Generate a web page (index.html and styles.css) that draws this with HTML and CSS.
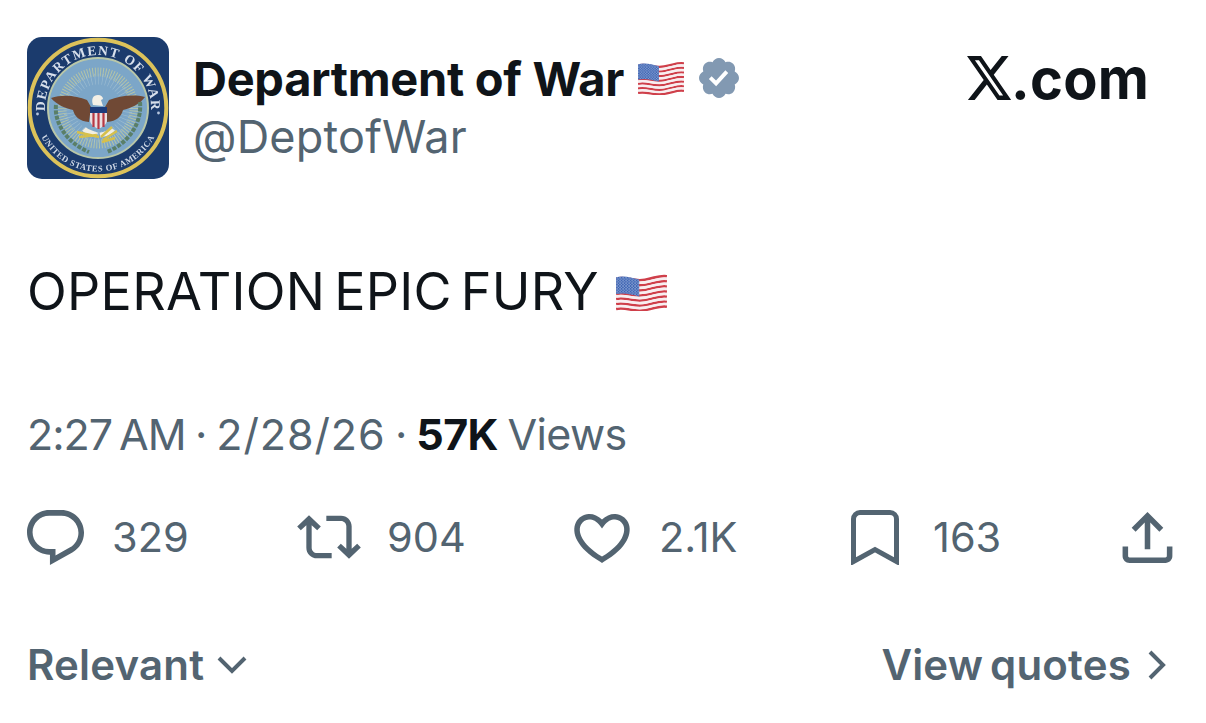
FILE: index.html
```html
<!DOCTYPE html>
<html lang="en">
<head>
<meta charset="utf-8">
<title>Department of War on X</title>
<link rel="stylesheet" href="styles.css">
</head>
<body>
<svg class="defs" width="0" height="0" aria-hidden="true">
  <defs>
    <pattern id="stars" width="2.6" height="2.4" patternUnits="userSpaceOnUse">
      <circle cx="0.8" cy="0.8" r="0.55" fill="#c9d4ec"/>
      <circle cx="2.1" cy="2" r="0.45" fill="#b6c4e4"/>
    </pattern>
    <path id="stripe" d="M0 2C9 0 15 5 25 3S38-1 44 0" fill="none" stroke-width="2.3"/>
    <symbol id="flag" viewBox="0 0 44 32">
      <g stroke="#cf3f4a">
        <use href="#stripe" y="2"/><use href="#stripe" y="6.4"/><use href="#stripe" y="10.8"/><use href="#stripe" y="15.2"/><use href="#stripe" y="19.6"/><use href="#stripe" y="24"/><use href="#stripe" y="28.2"/>
      </g>
      <g stroke="#f8eef0">
        <use href="#stripe" y="4.2"/><use href="#stripe" y="8.6"/><use href="#stripe" y="13"/><use href="#stripe" y="17.4"/><use href="#stripe" y="21.8"/><use href="#stripe" y="26.1"/>
      </g>
      <path d="M0 2.800C7 1.200 13 3 20 4.800V19.400C13 17.600 7 16 0 17.400Z" fill="#3f66b4"/>
      <path d="M0 2.800C7 1.200 13 3 20 4.800V19.400C13 17.600 7 16 0 17.400Z" fill="url(#stars)"/>
    </symbol>
    <path id="arc-top" d="M71 71m-53 0a53 53 0 0 1 106 0"/>
    <path id="arc-bottom" d="M71 71m-63.500 0a63.500 63.500 0 0 0 127 0"/>
    <filter id="soft"><feGaussianBlur stdDeviation="0.45"/></filter>
  </defs>
</svg>

<main class="post">
  <header class="head">
    <div class="who">
      <svg class="seal" viewBox="0 0 142 142" role="img" aria-label="Department of War seal">
        <rect width="142" height="142" rx="15" fill="#1b3b6d"/>
        <g filter="url(#soft)">
          <circle cx="71" cy="71" r="68.300" fill="none" stroke="#dcc25a" stroke-width="4"/>
          <circle cx="71" cy="71" r="50" fill="#7ca6c8" stroke="#b9c7a8" stroke-width="2"/>
          <circle cx="71" cy="71" r="36" fill="none" stroke="#c9cf9a" stroke-width="9" stroke-dasharray="0.9 1.7" stroke-opacity=".75"/>
          <circle cx="71" cy="71" r="29" fill="none" stroke="#a8c4d4" stroke-width="11" stroke-dasharray="0.7 3" stroke-opacity=".7"/>
          <path d="M24 61C36 57 50 59 60 63L64 70 62 85C52 84 48 80 46 73 38 71 30 68 24 61Z" fill="#6f4a35"/>
          <path d="M118 60C106 57 92 59 82 63L78 70 80 85C90 84 94 80 96 73 104 71 112 68 118 60Z" fill="#6f4a35"/>
          <path d="M66 68C64 62 66 58 71 58 74 58 76 60 76 62L74 63 76 69Z" fill="#f4f0e6"/>
          <path d="M63 70H80V83C80 88 75 90 71.500 92 68 90 63 88 63 83Z" fill="#e9dfe1"/>
          <path d="M63 70H80V76H63Z" fill="#1f3a7a"/>
          <path d="M66.500 76V90M71.500 76V92M76.500 76V90" stroke="#b73945" stroke-width="2.200"/>
          <path d="M57 92C61 96 66 96 70 98M86 92C82 97 78 97 73 98" stroke="#f1eee2" stroke-width="5" fill="none"/>
          <path d="M50 95L72 100M52 100L70 98M85 90L74 100M90 94L76 103M88 101L75 105" stroke="#d6c04c" stroke-width="2.400" fill="none"/>
          <path d="M29 68C27 86 40 106 62 115" fill="none" stroke="#5a7f68" stroke-width="4" stroke-dasharray="4 1.400"/>
          <path d="M113 65C115 86 102 106 80 115" fill="none" stroke="#5a7f68" stroke-width="4" stroke-dasharray="4 1.400"/>
          <text class="seal-top"><textPath href="#arc-top" startOffset="50%">DEPARTMENT OF WAR</textPath></text>
          <text class="seal-low"><textPath href="#arc-bottom" startOffset="50%">UNITED STATES OF AMERICA</textPath></text>
          <circle cx="10.500" cy="77" r="1.400" fill="#b7c6de"/>
          <circle cx="131.500" cy="76" r="1.400" fill="#b7c6de"/>
        </g>
      </svg>
      <div class="names">
        <div class="name-row">
          <span class="name">Department of War</span>
          <svg class="flag-small"><use href="#flag"/></svg>
          <svg class="badge" viewBox="1.75 1.75 20.5 20.5"><path fill="#8299b2" d="M22.25 12c0-1.43-.88-2.67-2.19-3.34.46-1.39.2-2.9-.81-3.91s-2.52-1.27-3.91-.81c-.66-1.31-1.91-2.19-3.34-2.19s-2.67.88-3.33 2.19c-1.4-.46-2.91-.2-3.92.81s-1.26 2.52-.8 3.91c-1.31.67-2.2 1.91-2.2 3.34s.89 2.67 2.2 3.34c-.46 1.39-.21 2.9.8 3.91s2.52 1.26 3.91.81c.67 1.31 1.91 2.19 3.34 2.19s2.68-.88 3.34-2.19c1.39.45 2.9.2 3.91-.81s1.27-2.52.81-3.91c1.31-.67 2.19-1.91 2.19-3.34zm-11.71 4.2L6.8 12.46l1.41-1.42 2.26 2.26 4.8-5.23 1.47 1.36-6.2 6.77z"/></svg>
        </div>
        <div class="handle">@DeptofWar</div>
      </div>
    </div>
    <div class="brand">
      <svg class="x-logo" viewBox="1.25 2.25 21.5 19.5" preserveAspectRatio="none"><path fill="#0f1419" d="M18.244 2.25h3.308l-7.227 8.26 8.502 11.24H16.17l-5.214-6.817L4.99 21.75H1.68l7.73-8.835L1.254 2.25H8.08l4.713 6.231zm-1.161 17.52h1.833L7.084 4.126H5.117z"/></svg><span class="brand-text">.com</span>
    </div>
  </header>

  <p class="body-text">OPERATION EPIC FURY <svg class="flag-large"><use href="#flag"/></svg></p>

  <p class="meta"><span class="time">2:27&#8239;AM</span> · <span class="date">2/28/26</span> · <b class="views">57K</b> Views</p>

  <div class="actions">
    <div class="action">
      <svg class="ico ico-reply" viewBox="1.75 2 20.5 19.7"><path d="M1.751 10c0-4.42 3.584-8 8.005-8h4.366c4.49 0 8.129 3.64 8.129 8.13 0 2.96-1.607 5.68-4.196 7.11l-8.054 4.46v-3.69h-.067c-4.49.1-8.183-3.51-8.183-8.01zm2 0c0 3.37 2.77 6.08 6.138 6.01l.351-.01h1.761v2.3l5.087-2.81c1.951-1.08 3.163-3.13 3.163-5.36 0-3.39-2.744-6.13-6.129-6.13H9.756C6.439 4 3.751 6.69 3.751 10z"/></svg>
      <span class="count">329</span>
    </div>
    <div class="action action-tight">
      <svg class="ico ico-repost" viewBox="0 3.88 24 16.24"><path d="M4.5 3.88l4.432 4.14-1.364 1.46L5.5 7.55V16c0 1.1.896 2 2 2H13v2H7.5c-2.209 0-4-1.79-4-4V7.55L1.432 9.48.068 8.02 4.5 3.88zM16.5 6H11V4h5.5c2.209 0 4 1.79 4 4v8.45l2.068-1.93 1.364 1.46-4.432 4.14-4.432-4.14 1.364-1.46 2.068 1.93V8c0-1.1-.896-2-2-2z"/></svg>
      <span class="count">904</span>
    </div>
    <div class="action">
      <svg class="ico ico-heart" viewBox="1.75 2.8 20.5 18.4"><path d="M16.697 5.5c-1.222-.06-2.679.51-3.89 2.16l-.805 1.09-.806-1.09C9.984 6.01 8.526 5.44 7.304 5.5c-1.243.07-2.349.78-2.91 1.91-.552 1.12-.633 2.78.479 4.82 1.074 1.97 3.257 4.27 7.129 6.61 3.87-2.34 6.052-4.64 7.126-6.61 1.111-2.04 1.03-3.7.477-4.82-.561-1.13-1.666-1.84-2.908-1.91zm4.187 7.69c-1.351 2.48-4.001 5.12-8.379 7.67l-.503.3-.504-.3c-4.379-2.55-7.029-5.19-8.382-7.67-1.36-2.5-1.41-4.86-.514-6.67.887-1.79 2.647-2.91 4.601-3.01 1.651-.09 3.368.56 4.798 2.01 1.429-1.45 3.146-2.1 4.796-2.01 1.954.1 3.714 1.22 4.601 3.01.896 1.81.846 4.17-.514 6.67z"/></svg>
      <span class="count">2.1K</span>
    </div>
    <div class="action action-wide">
      <svg class="ico ico-mark" viewBox="0 0 48 55"><path class="line" d="M2.5 51.500V9A6.500 6.500 0 0 1 9 2.500H39A6.500 6.500 0 0 1 45.500 9V51.500L24 39.500Z"/></svg>
      <span class="count">163</span>
    </div>
    <svg class="ico ico-share" viewBox="3 2.59 18 18.41"><path d="M12 2.59l5.7 5.7-1.41 1.42L13 6.41V16h-2V6.41l-3.3 3.3-1.41-1.42L12 2.59zM21 15l-.02 3.51c0 1.38-1.12 2.49-2.5 2.49H5.5C4.11 21 3 19.88 3 18.5V15h2v3.5c0 .28.22.5.5.5h12.98c.28 0 .5-.22.5-.5L19 15h2z"/></svg>
  </div>

  <footer class="foot">
    <div class="foot-link">Relevant <svg class="chev-down" viewBox="0 0 30 18"><path class="line" d="M2 2L15 15 28 2"/></svg></div>
    <div class="foot-link foot-quotes">View quotes <svg class="chev-right" viewBox="0 0 18 30"><path class="line" d="M2 2L15 15 2 28"/></svg></div>
  </footer>
</main>
</body>
</html>
```
FILE: styles.css
```css
* { box-sizing: border-box; }
html, body { margin: 0; padding: 0; background: #fff; }
body {
  width: 1206px;
  height: 723px;
  overflow: hidden;
  color: #0f1419;
  font-family: Inter, "Liberation Sans", sans-serif;
}
.defs { display: block; height: 0; }
.post { padding: 37px 32px 0 27px; }

.head { display: flex; justify-content: space-between; align-items: flex-start; }
.who { display: flex; gap: 24px; }
.seal { width: 142px; height: 142px; display: block; }
.seal-top { font: 700 13.5px "Liberation Serif", serif; fill: #d8e0ec; text-anchor: middle; letter-spacing: 1.3px; }
.seal-low { font: 700 8.6px "Liberation Serif", serif; fill: #cfd8e6; text-anchor: middle; letter-spacing: .6px; }
.names { display: flex; flex-direction: column; padding-top: 12px; }
.name-row { display: flex; align-items: center; height: 58px; }
.name { font-size: 47px; font-weight: 700; letter-spacing: -.3px; white-space: nowrap; }
.flag-small { width: 46px; height: 34px; margin-left: 14px; }
.badge { width: 40px; height: 40px; margin-left: 15px; }
.handle { font-size: 45px; color: #536471; line-height: 60px; letter-spacing: .2px; }

.brand { display: flex; align-items: center; margin: 15px 25px 0 0; }
.x-logo { width: 44px; height: 44px; display: block; }
.brand-text { padding-top: 2px; font-size: 56px; font-weight: 700; line-height: 50px; letter-spacing: .2px; }

.body-text {
  display: flex;
  align-items: center;
  gap: 17px;
  margin: 78px 0 0;
  font-size: 52px;
  line-height: 70px;
  letter-spacing: .3px;
  word-spacing: -6px;
  white-space: nowrap;
}
.flag-large { width: 51px; height: 37px; }

.meta {
  margin: 77px 0 0;
  font-size: 43px;
  line-height: 60px;
  color: #536471;
  letter-spacing: -.6px;
  word-spacing: -2px;
}
.time { letter-spacing: -1px; }
.date { letter-spacing: .9px; }
.views { color: #0f1419; font-weight: 700; }

.actions {
  display: grid;
  grid-template-columns: 270px 276px 278px 271px auto;
  align-items: center;
  margin-top: 45px;
  height: 56px;
}
.action { display: flex; align-items: center; gap: 28px; }
.action-tight { gap: 26px; }
.action-wide { gap: 34px; }
.ico { display: block; fill: #536471; }
.ico-reply { width: 57px; height: 55px; }
.ico-repost { width: 64px; height: 44px; }
.ico-heart { width: 58px; height: 51px; }
.ico-mark { width: 48px; height: 55px; }
.ico-share { width: 51px; height: 51px; }
.line { fill: none; stroke: #536471; stroke-width: 5; }
.count { font-size: 41.5px; color: #536471; }

.foot {
  display: flex;
  justify-content: space-between;
  margin: 72px 8px 0 0;
}
.foot-link {
  display: flex;
  align-items: center;
  gap: 13px;
  font-size: 42px;
  font-weight: 600;
  line-height: 56px;
  color: #536471;
  letter-spacing: .2px;
}
.foot-quotes { gap: 17px; word-spacing: -4px; }
.chev-down { width: 30px; height: 18px; }
.chev-right { width: 18px; height: 30px; }
.foot .line { stroke-width: 4; }
```
